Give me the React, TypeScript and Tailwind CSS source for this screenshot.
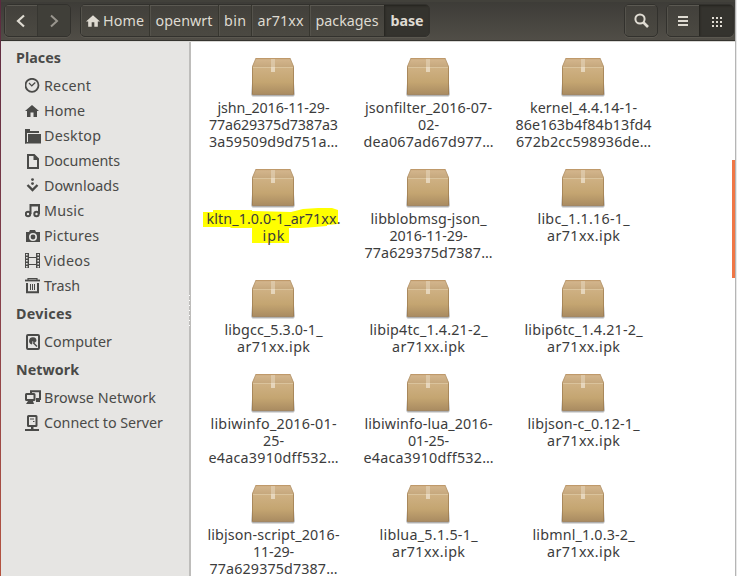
import { useLayoutEffect, useRef, useState, type ReactNode } from "react";

/** A line of text whose tracking is computed so that it spans `w` pixels. */
function Fit({ children, w, className = "" }: { children: string; w: number; className?: string }) {
  const ref = useRef<HTMLSpanElement>(null);
  const [gap, setGap] = useState<number | null>(null);
  useLayoutEffect(() => {
    if (ref.current && gap === null) {
      const natural = ref.current.getBoundingClientRect().width;
      setGap((w - natural) / Math.max(1, children.length - 1));
    }
  }, [w, children, gap]);
  return (
    <span
      ref={ref}
      className={`inline-block whitespace-pre ${className}`}
      style={gap === null ? undefined : { letterSpacing: gap, marginRight: -gap }}
    >
      {children}
    </span>
  );
}

type Line = [string, number];

const files: Line[][] = [
  [["jshn_2016-11-29-", 112], ["77a629375d7387a3", 129], ["3a59509d9d751a…", 129]],
  [["jsonfilter_2016-07-", 127], ["02-", 21], ["dea067ad67d977…", 130]],
  [["kernel_4.4.14-1-", 107], ["86e163b4f84b13fd4", 136], ["672b2cc598936de…", 135]],
  [["kltn_1.0.0-1_ar71xx.", 134], ["ipk", 22]],
  [["libblobmsg-json_", 116], ["2016-11-29-", 78], ["77a629375d7387…", 128]],
  [["libc_1.1.16-1_", 92], ["ar71xx.ipk", 73]],
  [["libgcc_5.3.0-1_", 98], ["ar71xx.ipk", 73]],
  [["libip4tc_1.4.21-2_", 118], ["ar71xx.ipk", 73]],
  [["libip6tc_1.4.21-2_", 118], ["ar71xx.ipk", 73]],
  [["libiwinfo_2016-01-", 126], ["25-", 21], ["e4aca3910dff532…", 130]],
  [["libiwinfo-lua_2016-", 128], ["01-25-", 41], ["e4aca3910dff532…", 130]],
  [["libjson-c_0.12-1_", 112], ["ar71xx.ipk", 73]],
  [["libjson-script_2016-", 132], ["11-29-", 41], ["77a629375d7387…", 128]],
  [["liblua_5.1.5-1_", 98], ["ar71xx.ipk", 73]],
  [["libmnl_1.0.3-2_", 102], ["ar71xx.ipk", 73]],
];

function Box() {
  return (
    <svg width="46" height="41" viewBox="0 0 46 41" className="block">
      <defs>
        <linearGradient id="front" x1="0" y1="0" x2="0" y2="1">
          <stop offset="0" stopColor="#cfb184" />
          <stop offset="0.55" stopColor="#c4a571" />
          <stop offset="1" stopColor="#a98b61" />
        </linearGradient>
        <linearGradient id="lid" x1="0" y1="0" x2="0" y2="1">
          <stop offset="0" stopColor="#c7a57a" />
          <stop offset="0.2" stopColor="#d2b48b" />
          <stop offset="1" stopColor="#c4a67b" />
        </linearGradient>
        <linearGradient id="shade" x1="0" y1="0" x2="0" y2="1">
          <stop offset="0" stopColor="#888" stopOpacity="0" />
          <stop offset="1" stopColor="#777" stopOpacity="0.5" />
        </linearGradient>
      </defs>
      <rect x="1" y="25" width="44" height="13" rx="2" fill="url(#shade)" />
      <rect x="2" y="37" width="42" height="2" rx="1" fill="#999" opacity="0.35" />
      <path d="M6 0H40L44 9V10H2V9Z" fill="url(#lid)" />
      <path d="M6 .5H40" stroke="#bf996a" />
      <path d="M6 0L2.3 9M40 0L43.7 9" stroke="#b3936a" strokeWidth=".8" />
      <path d="M2 9H44V36.5H2Z" fill="url(#front)" />
      <path d="M2 9.5H44" stroke="#dac39c" />
      <path d="M2.5 9V36.5H43.5V9" fill="none" stroke="#98774c" strokeOpacity=".65" />
      <path d="M21 1H25V9H21Z" fill="#eadcc3" opacity=".5" />
      <path d="M21 9H25V14H21Z" fill="#eee2cd" opacity=".75" />
    </svg>
  );
}

function Highlight() {
  return (
    <svg className="absolute -left-[5px] -top-[2px]" width="140" height="38" viewBox="0 0 140 38">
      <path
        fill="#ffff00"
        d="M3 4H13V2H52V3L91 4L103 1L118 0H132L138 2V16L127 17V18L115 19L101 20L89 20V35H52V20L31 20L30 19H3Z"
      />
    </svg>
  );
}

function FileItem({ lines, marked }: { lines: Line[]; marked: boolean }) {
  return (
    <div className="flex flex-col items-center">
      <Box />
      <div className="relative flex w-[136px] flex-col items-center">
        {marked && <Highlight />}
        {lines.map(([text, w], i) => (
          <div key={i} className="relative flex h-[17px] items-center justify-center pl-[2px] text-[14.3px] leading-[17px] text-[#3c3c3c]">
            <Fit w={w}>{text}</Fit>
          </div>
        ))}
      </div>
    </div>
  );
}

const glyph: Record<string, ReactNode> = {
  recent: (
    <g fill="none" stroke="currentColor">
      <circle cx="8" cy="7.3" r="6.5" strokeWidth="1.8" />
      <path d="M5 5L7.8 7.8L11.3 4.5" strokeWidth="1.2" />
    </g>
  ),
  home: <path d="M8 2L15 8H13V14H9.5V9.5H6.5V14H3V8H1Z" />,
  desktop: (
    <>
      <path d="M1 1H6V3H15V5H3V14H1Z" />
      <path d="M1 1H2.2V15.5H1Z" />
      <path d="M4 6H17V15.5H1V14H4Z" />
    </>
  ),
  documents: <path fillRule="evenodd" d="M3 1H10.5L15 5.5V16H3ZM5 3V14H13V7H9.5V3Z" />,
  downloads: (
    <>
      <circle cx="8.5" cy="1.6" r="1.4" />
      <circle cx="8.5" cy="5.6" r="1.4" />
      <path d="M3.5 7L8.5 12L13.5 7" fill="none" stroke="currentColor" strokeWidth="2.4" />
    </>
  ),
  music: (
    <g fill="none" stroke="currentColor" strokeWidth="2">
      <circle cx="4" cy="11" r="2.2" />
      <circle cx="12.5" cy="11" r="2.2" />
      <path d="M6.5 11V2H15V11" />
      <path d="M6.5 2.5H15" />
    </g>
  ),
  pictures: (
    <>
      <path fillRule="evenodd" d="M6 2H11L12 4H16V14H2V4H5ZM9 5A4 4 0 1 0 9 13A4 4 0 1 0 9 5Z" />
      <circle cx="9" cy="9" r="2.4" />
    </>
  ),
  videos: (
    <>
      <path d="M1 0H5V15H1ZM12 0H16V15H12Z" />
      <path d="M5 4.5H12M5 11.5H12" stroke="currentColor" strokeWidth="1" />
      <path d="M2.8 1V15M14.2 1V15" stroke="#e6e5e3" strokeWidth="1.6" strokeDasharray="1.6 1.4" />
    </>
  ),
  trash: (
    <g fill="none" stroke="currentColor">
      <path d="M1 2.5H16" strokeWidth="1.8" />
      <path d="M4 2V.6H13V2" strokeWidth="1.2" />
      <path d="M3 5V14.2H14V5" strokeWidth="2" />
      <path d="M6.5 6V12M8.5 6V12M10.5 6V12" strokeWidth="1" />
    </g>
  ),
  computer: (
    <>
      <rect x="3" y="1" width="12" height="14" rx="1" fill="none" stroke="currentColor" strokeWidth="2" />
      <path d="M8 10.5A3.7 3.7 0 1 1 12.5 7L10.5 9L8.5 7L8 10.5Z" />
      <path d="M9 8.5L13 12.5" stroke="currentColor" strokeWidth="1.4" />
    </>
  ),
  network: (
    <>
      <path d="M7 3V1.2H16V9H12" fill="none" stroke="currentColor" strokeWidth="2" />
      <path d="M12 9H16V12H12Z" />
      <rect x="2" y="4" width="8.5" height="6" rx=".5" fill="none" stroke="currentColor" strokeWidth="2" />
      <path d="M4 11H9L10 14H2Z" />
    </>
  ),
  server: (
    <>
      <rect x="4" y="1" width="8.5" height="10" rx=".5" fill="none" stroke="currentColor" strokeWidth="2" />
      <path d="M6 4H10M9 6.5H10.5" stroke="currentColor" strokeWidth="1.2" />
      <path d="M7 12H9.5V14H15V16H1V14H7Z" />
    </>
  ),
};

function Place({ icon, label, w }: { icon: string; label: string; w: number }) {
  return (
    <div className="flex h-[25px] items-center pl-6">
      <svg width="16" height="16" viewBox="1 0 16 16" fill="currentColor" className="mr-[3px] shrink-0">
        {glyph[icon]}
      </svg>
      <Fit w={w}>{label}</Fit>
    </div>
  );
}

function Heading({ label, w }: { label: string; w: number }) {
  return (
    <div className="flex h-[31px] items-center pl-[15px] font-bold">
      <Fit w={w}>{label}</Fit>
    </div>
  );
}

function Sidebar() {
  return (
    <nav className="relative flex w-[190px] shrink-0 flex-col border-r-2 border-[#bebdbb] bg-[#e6e5e3] text-[14.3px] leading-[20px] text-[#4a4a48]">
      <Heading label="Places" w={45} />
      <Place icon="recent" label="Recent" w={47} />
      <Place icon="home" label="Home" w={41} />
      <Place icon="desktop" label="Desktop" w={57} />
      <Place icon="documents" label="Documents" w={76} />
      <Place icon="downloads" label="Downloads" w={75} />
      <Place icon="music" label="Music" w={40} />
      <Place icon="pictures" label="Pictures" w={55} />
      <Place icon="videos" label="Videos" w={46} />
      <Place icon="trash" label="Trash" w={36} />
      <Heading label="Devices" w={56} />
      <Place icon="computer" label="Computer" w={68} />
      <Heading label="Network" w={63} />
      <Place icon="network" label="Browse Network" w={112} />
      <Place icon="server" label="Connect to Server" w={119} />
      <div className="absolute -right-[1px] top-[253px] flex flex-col gap-1">
        {Array.from({ length: 7 }, (_, i) => (
          <i key={i} className="block size-px bg-white" />
        ))}
      </div>
    </nav>
  );
}

const group = "flex h-[33px] overflow-hidden rounded-[5px] border border-[#32312d] bg-linear-to-b from-[#42403b] to-[#4b4942] shadow-[0_1px_0_#5b5850]";
const inner = "flex items-center justify-center shadow-[inset_0_1px_0_#5b5952,inset_1px_0_0_#55534c]";

function Header() {
  return (
    <header className="flex h-[42px] shrink-0 items-start border-b border-[#d9d8d5] bg-linear-to-b from-[#3c3b37] to-[#514e47] pl-[3px] text-[14.3px] text-[#dfdbd2] shadow-[inset_0_-1px_0_#35342f,inset_0_2px_0_#42413b]">
      <div className="flex w-full pt-1">
        <div className={`${group} w-[67px]`}>
          <div className={`${inner} w-[33px] border-r border-[#373631]`}>
            <svg width="12" height="14" viewBox="0 0 12 14" fill="none" stroke="#dfdbd2" strokeWidth="2.2">
              <path d="M9 1.5L3 7L9 12.5" />
            </svg>
          </div>
          <div className="flex flex-1 items-center justify-center bg-[#403f39]">
            <svg width="12" height="14" viewBox="0 0 12 14" fill="none" stroke="#99968e" strokeWidth="2">
              <path d="M3 1.5L9 7L3 12.5" />
            </svg>
          </div>
        </div>
        <div className={`${group} ml-[9px] w-[350px]`}>
          <div className={`${inner} w-[69px] gap-[3px] border-r border-[#37362f]`}>
            <svg width="14" height="14" viewBox="0 1 16 15" fill="#dfdbd2">
              <path d="M8 2L16 9H13.5V15H9.5V10H6.5V15H2.5V9H0Z" />
            </svg>
            <Fit w={41}>Home</Fit>
          </div>
          <div className={`${inner} w-[69px] border-r border-[#37362f]`}><Fit w={57}>openwrt</Fit></div>
          <div className={`${inner} w-[33px] border-r border-[#37362f]`}><Fit w={22}>bin</Fit></div>
          <div className={`${inner} w-[58px] border-r border-[#37362f]`}><Fit w={46}>ar71xx</Fit></div>
          <div className={`${inner} w-[74px]`}><Fit w={63}>packages</Fit></div>
          <div className="flex flex-1 items-center justify-center bg-[#34332e] pl-px pt-px font-bold shadow-[inset_1px_1px_2px_#25241f]"><Fit w={33}>base</Fit></div>
        </div>
        <div className={`${group} ml-auto w-[34px]`}>
          <div className={`${inner} flex-1`}>
            <svg width="15" height="15" viewBox="0 0 15 15" fill="none" stroke="#dfdbd2">
              <circle cx="6" cy="6" r="4.6" strokeWidth="2" />
              <path d="M9 9L14 14" strokeWidth="2.6" />
            </svg>
          </div>
        </div>
        <div className={`${group} ml-2 mr-[1px] w-[68px]`}>
          <div className={`${inner} w-[32px]`}>
            <svg width="10" height="10" viewBox="0 0 10 10" fill="#dfdbd2">
              <path d="M0 0H10V2H0ZM0 4H10V6H0ZM0 8H10V10H0Z" />
            </svg>
          </div>
          <div className="flex flex-1 items-center justify-center bg-[#34332e] pl-[2px] pt-0.5 shadow-[inset_1px_1px_2px_#25241f]">
            <svg width="10" height="10" viewBox="0 0 10 10" fill="#dfdbd2">
              <path d="M0 0H2V2H0ZM4 0H6V2H4ZM8 0H10V2H8ZM0 4H2V6H0ZM4 4H6V6H4ZM8 4H10V6H8ZM0 8H2V10H0ZM4 8H6V10H4ZM8 8H10V10H8Z" />
            </svg>
          </div>
        </div>
      </div>
    </header>
  );
}

export default function App() {
  return (
    <div className="flex h-[576px] w-[737px] overflow-hidden bg-white font-['Noto_Sans',sans-serif]">
      <div className="w-px shrink-0 bg-linear-to-b from-[#5b2a3f] via-[#853f4a] to-[#b5533f]" />
      <div className="flex min-w-0 flex-1 flex-col">
        <Header />
        <div className="flex min-h-0 flex-1">
          <Sidebar />
          <main className="grid flex-1 auto-rows-max grid-cols-[155px_155px_155px] gap-y-[19px] overflow-hidden pl-[4px] pt-4">
            {files.map((lines, i) => (
              <FileItem key={i} lines={lines} marked={i === 3} />
            ))}
          </main>
          <div className="w-[3px] shrink-0 pt-[118px]">
            <div className="h-[118px] bg-[#f07746]" />
          </div>
        </div>
      </div>
      <div className="w-px shrink-0 bg-[#b5b5b5]" />
      <div className="w-px shrink-0 bg-[#e8e8e8]" />
    </div>
  );
}
